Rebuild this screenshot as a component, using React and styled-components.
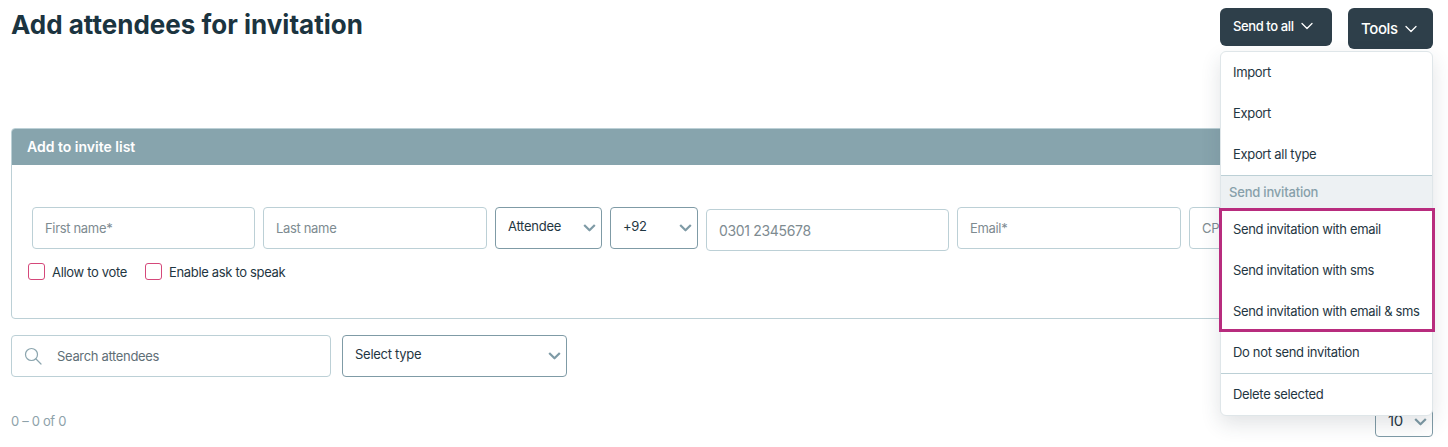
import React from "react";
import styled, { createGlobalStyle } from "styled-components";

const GlobalStyle = createGlobalStyle`
  html, body {
    margin: 0;
    padding: 0;
    background: #fff;
    overflow: hidden;
  }
  * {
    box-sizing: border-box;
  }
  body {
    font-family: Inter, "Liberation Sans", sans-serif;
    letter-spacing: -0.33px;
    color: #1f3642;
  }
`;

const Chevron = ({ size = 14 }) => (
  <svg width={size} height={size} viewBox="0 0 14 14" fill="none">
    <path d="M2 4.5L7 9.5L12 4.5" stroke="currentColor" strokeWidth="1.3" strokeLinecap="round" strokeLinejoin="round" />
  </svg>
);

const SelectChevron = () => (
  <svg width="13" height="9" viewBox="0 0 13 9" fill="none">
    <path d="M1.2 1.5L6.5 6.8L11.8 1.5" stroke="#7f9ba6" strokeWidth="2.2" strokeLinejoin="round" />
  </svg>
);

const SearchIcon = () => (
  <svg width="18" height="18" viewBox="0 0 18 18" fill="none">
    <circle cx="7.5" cy="7.5" r="6" stroke="#8ba5ae" strokeWidth="1.2" />
    <path d="M12 12L17 17" stroke="#8ba5ae" strokeWidth="1.2" strokeLinecap="round" />
  </svg>
);

function Dropdown({ value, width, height, padTop = 0, padBottom = 4, size = 13 }) {
  return (
    <SelectWrap $width={width} $height={height}>
      <NativeSelect defaultValue={value} $padTop={padTop} $padBottom={padBottom} $size={size}>
        <option>{value}</option>
      </NativeSelect>
      <SelectIcon $shift={padTop}>
        <SelectChevron />
      </SelectIcon>
    </SelectWrap>
  );
}

function Check({ label }) {
  return (
    <CheckLabel>
      <CheckBox type="checkbox" />
      {label}
    </CheckLabel>
  );
}

export default function App() {
  return (
    <Page>
      <GlobalStyle />
      <TopBar>
        <Title>Add attendees for invitation</Title>
        <TopActions>
          <ActionButton $width={112} $height={38} $size={13} $pad={3}>
            Send to all <Chevron />
          </ActionButton>
          <ActionButton $width={85} $height={41} $size={15} $pad={0}>
            Tools <Chevron />
          </ActionButton>
        </TopActions>
      </TopBar>

      <Card>
        <CardHeader>Add to invite list</CardHeader>
        <CardBody>
          <FormRow>
            <TextField $width={223} placeholder="First name*" />
            <TextField $width={224} placeholder="Last name" />
            <Dropdown value="Attendee" width={107} height={42} />
            <Dropdown value="+92" width={88} height={42} />
            <PhoneField placeholder="0301 2345678" />
            <TextField $width={224} placeholder="Email*" />
            <TextField $width={224} placeholder="CPF" />
          </FormRow>
          <CheckRow>
            <Check label="Allow to vote" />
            <Check label="Enable ask to speak" />
          </CheckRow>
        </CardBody>
      </Card>

      <FilterRow>
        <SearchBox>
          <SearchIcon />
          <SearchInput placeholder="Search attendees" />
        </SearchBox>
        <Dropdown value="Select type" width={225} height={42} />
      </FilterRow>

      <PagerRow>
        <PagerText>0 – 0 of 0</PagerText>
        <Dropdown value="10" width={58} height={37} padTop={3} padBottom={0} size={15} />
      </PagerRow>

      <Menu>
        <MenuItem>Import</MenuItem>
        <MenuItem>Export</MenuItem>
        <MenuItem>Export all type</MenuItem>
        <MenuSection>Send invitation</MenuSection>
        <MenuItem>Send invitation with email</MenuItem>
        <MenuItem>Send invitation with sms</MenuItem>
        <MenuItem>Send invitation with email &amp; sms</MenuItem>
        <MenuItem>Do not send invitation</MenuItem>
        <MenuDivider />
        <MenuItem>Delete selected</MenuItem>
      </Menu>
      <Highlight />
    </Page>
  );
}

const Page = styled.div`
  position: relative;
  width: 1448px;
  height: 447px;
  padding: 8px 15px 0 11px;
  overflow: hidden;
`;

const TopBar = styled.div`
  display: flex;
  justify-content: space-between;
  align-items: flex-start;
  height: 120px;
`;

const Title = styled.h1`
  margin: 0;
  font-size: 26px;
  line-height: 34px;
  font-weight: 700;
  letter-spacing: 0;
  color: #1b3440;
`;

const TopActions = styled.div`
  display: flex;
  gap: 16px;
`;

const ActionButton = styled.button`
  display: flex;
  align-items: center;
  gap: 6px;
  width: ${(p) => p.$width}px;
  height: ${(p) => p.$height}px;
  padding: 0 0 ${(p) => p.$pad}px 13px;
  border: 0;
  border-radius: 6px;
  background: #2e3f4a;
  color: #fff;
  font-family: inherit;
  font-size: ${(p) => p.$size}px;
  letter-spacing: -0.4px;
  font-weight: 500;
`;

const Card = styled.section`
  height: 191px;
  border: 1px solid #bcd0d6;
  border-radius: 4px;
  overflow: hidden;
`;

const CardHeader = styled.div`
  height: 37px;
  margin: -1px -1px 0;
  padding: 0 16px;
  background: #87a4ad;
  color: #fff;
  font-size: 14px;
  font-weight: 600;
  letter-spacing: 0;
  line-height: 37px;
`;

const CardBody = styled.div`
  padding: 42px 0 0 16px;
`;

const FormRow = styled.div`
  display: flex;
  align-items: flex-start;
  gap: 8px;
  padding-left: 4px;
`;

const fieldText = `
  font-family: inherit;
  font-size: 13px;
  letter-spacing: inherit;
  color: #1f3642;
  &::placeholder {
    color: #7e8b91;
    opacity: 1;
  }
`;

const TextField = styled.input`
  flex: none;
  width: ${(p) => p.$width}px;
  height: 42px;
  padding: 0 12px;
  border: 1px solid #bcd0d6;
  border-radius: 4px;
  outline: none;
  ${fieldText}
`;

const PhoneField = styled(TextField)`
  width: 243px;
  margin-top: 2px;
  font-size: 14px;
`;

const SelectWrap = styled.div`
  position: relative;
  flex: none;
  width: ${(p) => p.$width}px;
  height: ${(p) => p.$height}px;
`;

const NativeSelect = styled.select`
  appearance: none;
  width: 100%;
  height: 100%;
  padding: ${(p) => p.$padTop}px 12px ${(p) => p.$padBottom}px;
  border: 1px solid #7f9ba6;
  border-radius: 4px;
  background: #fff;
  color: #1f3642;
  font-family: inherit;
  font-size: ${(p) => p.$size}px;
  letter-spacing: -0.27px;
  outline: none;
`;

const SelectIcon = styled.span`
  position: absolute;
  top: calc(50% + ${(p) => p.$shift}px);
  right: 6px;
  display: flex;
  transform: translateY(-50%);
  pointer-events: none;
`;

const CheckRow = styled.div`
  display: flex;
  gap: 18px;
  margin-top: 12px;
`;

const CheckLabel = styled.label`
  display: flex;
  align-items: center;
  gap: 7px;
  font-size: 13px;
  color: #1f3642;
`;

const CheckBox = styled.input`
  appearance: none;
  width: 17px;
  height: 17px;
  margin: 0;
  border: 1px solid #d5487a;
  border-radius: 3px;
  background: #fff;
`;

const FilterRow = styled.div`
  display: flex;
  gap: 11px;
  margin-top: 16px;
`;

const SearchBox = styled.div`
  display: flex;
  align-items: center;
  gap: 15px;
  width: 320px;
  height: 42px;
  padding-left: 12px;
  border: 1px solid #bcd0d6;
  border-radius: 4px;
`;

const SearchInput = styled.input`
  flex: 1;
  min-width: 0;
  padding: 0;
  border: 0;
  outline: none;
  ${fieldText}
  &::placeholder {
    color: #5f6f77;
    opacity: 1;
  }
`;

const PagerRow = styled.div`
  display: flex;
  justify-content: space-between;
  align-items: center;
  margin-top: 23px;
`;

const PagerText = styled.span`
  padding-top: 4px;
  font-size: 13px;
  color: #8ea2aa;
`;

const Menu = styled.div`
  position: absolute;
  top: 51px;
  left: 1220px;
  width: 213px;
  height: 365px;
  background: #fff;
  border: 1px solid #dfe6e9;
  border-radius: 6px;
  box-shadow: 0 8px 20px rgba(40, 60, 70, 0.14);
`;

const MenuItem = styled.div`
  height: 41px;
  padding: 0 12px;
  font-size: 13px;
  line-height: 41px;
  color: #1f3642;
  white-space: nowrap;
`;

const MenuSection = styled.div`
  height: 34px;
  padding: 0 8px;
  background: #edf1f3;
  border-top: 1px solid #bcd0d6;
  font-size: 13px;
  font-weight: 500;
  letter-spacing: -0.2px;
  line-height: 33px;
  color: #87a0aa;
`;

const MenuDivider = styled.div`
  height: 1px;
  background: #bcd0d6;
`;

const Highlight = styled.div`
  position: absolute;
  top: 208px;
  left: 1219px;
  width: 216px;
  height: 124px;
  border: 3px solid #b82c7e;
  pointer-events: none;
`;
